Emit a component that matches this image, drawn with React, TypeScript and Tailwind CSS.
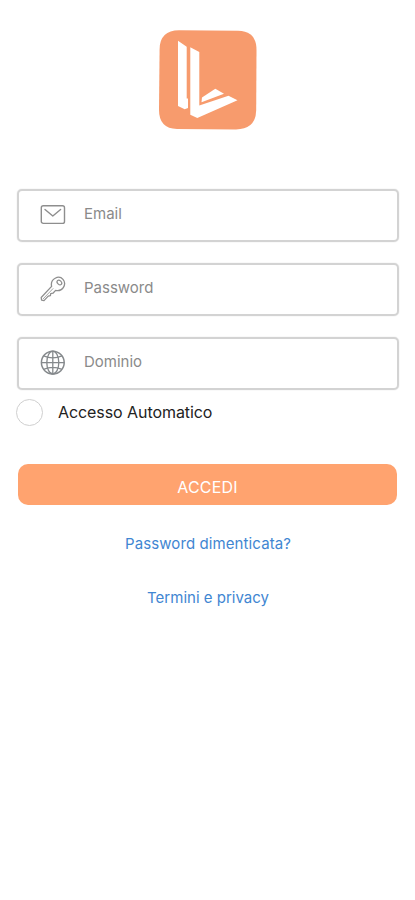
import React, { useState } from 'react';

type IconProps = { className?: string };

function Logo() {
  return (
    <svg width="98" height="100" viewBox="0 0 98 100" fill="none" aria-hidden="true">
      <path d="M20 0.3 L79 0.8 Q97.5 1 97.5 20 L97.2 80 Q97 99.4 77 99.4 L18 99 Q0 98.5 0 80 L0.6 19 Q1 0.5 20 0.3Z" fill="#f79b6d" />
      <path d="M19 10.7 27.7 16.7 V68.5 H29 V78 L25.7 79.3 19 76Z" fill="#fff" />
      <path d="M31.3 17.3 40.3 22 V75.5 L69.5 65.7 78.5 70.2 38.3 88 31.3 84.7Z" fill="#fff" />
      <path d="M43 67.5 56.3 58.8 65 63.8 42.5 72.3Z" fill="#fff" />
    </svg>
  );
}

function MailIcon({ className }: IconProps) {
  return (
    <svg className={className} width="26" height="26" viewBox="0 0 26 26" fill="none" stroke="currentColor" strokeWidth="1.4" strokeLinejoin="round" strokeLinecap="round">
      <rect x="1.3" y="3.8" width="23.2" height="17.6" rx="2" />
      <path d="M5 7.5 12.8 14 20.6 7.5" />
    </svg>
  );
}

function KeyIcon({ className }: IconProps) {
  return (
    <svg className={className} width="26" height="26" viewBox="0 0 26 26" fill="none" stroke="currentColor" strokeWidth="1.3" strokeLinejoin="round" strokeLinecap="round">
      <path d="M11.6 10.4C10.9 7 12.3 3.8 15.2 2.2 18 0.7 21.2 1.3 23 3.4 24.9 5.7 25 9 23.3 11.6 21.6 14.1 18.6 15.2 15.6 14.4L13 17.2 10.7 17.6 10.4 19.7 8.2 20.1 4 24.6 1.6 24.2 1.2 21.5Z" />
      <path d="M13 12.6 3.2 22.8" strokeWidth="0.8" />
      <ellipse cx="19.4" cy="6.5" rx="2.7" ry="1.9" transform="rotate(45 19.4 6.5)" strokeWidth="1.2" />
    </svg>
  );
}

function GlobeIcon({ className }: IconProps) {
  return (
    <svg className={className} width="26" height="26" viewBox="0 0 26 26" fill="none" stroke="currentColor" strokeWidth="1.3">
      <circle cx="12.8" cy="12.6" r="11.4" strokeWidth="1.5" />
      <ellipse cx="12.8" cy="12.6" rx="6" ry="11.4" />
      <path d="M12.8 1.2V24M1.4 12.6H24.2M3.6 5.8Q12.8 10 22 5.8M3.6 19.4Q12.8 15.2 22 19.4" />
    </svg>
  );
}

interface FieldProps {
  icon: React.ReactNode;
  type: string;
  placeholder: string;
}

function Field({ icon, type, placeholder }: FieldProps) {
  const [value, setValue] = useState('');

  return (
    <label className="flex h-[53px] items-center rounded-[5px] border-2 border-[#d3d3d3] pl-[21px] shadow-[0_0_1px_#bdbdbd]">
      {icon}
      <input
        type={type}
        value={value}
        onChange={(e) => setValue(e.target.value)}
        placeholder={placeholder}
        className="ml-[18px] min-w-0 flex-1 bg-transparent pb-0.5 text-[15px] outline-none placeholder:text-[#8a8a8a]"
      />
    </label>
  );
}

export default function App() {
  const [autoLogin, setAutoLogin] = useState(false);

  return (
    <div className="flex min-h-screen flex-col bg-white pr-4 pl-[17px] pt-[30px] font-[Inter,sans-serif]">
      <div className="flex justify-center">
        <Logo />
      </div>

      <form className="mt-[59px] flex flex-col" onSubmit={(e) => e.preventDefault()}>
        <div className="flex flex-col gap-[21px]">
          <Field type="email" placeholder="Email" icon={<MailIcon className="mb-px text-[#8e8e8e]" />} />
          <Field type="password" placeholder="Password" icon={<KeyIcon className="mb-px text-[#8e8e8e]" />} />
          <Field type="text" placeholder="Dominio" icon={<GlobeIcon className="mb-px text-[#85898c]" />} />
        </div>

        <button
          type="button"
          role="checkbox"
          aria-checked={autoLogin}
          onClick={() => setAutoLogin(!autoLogin)}
          className="-ml-px mt-[9px] flex h-[27px] items-center gap-[15px] text-[16px] tracking-[-0.07px] text-[#222222]"
        >
          <span className="flex size-[27px] items-center justify-center rounded-full border border-[#cfcfcf]">
            {autoLogin && <span className="size-4 rounded-full bg-[#ffa36f]" />}
          </span>
          <span className="pb-0.5">Accesso Automatico</span>
        </button>

        <button type="submit" className="ml-px mr-0.5 mt-[38px] h-[41px] rounded-[10px] bg-[#ffa36f] pt-1 text-[16px] tracking-[0.2px] text-white">
          ACCEDI
        </button>
      </form>

      <div className="mt-[27px] flex flex-col items-center gap-[30px] text-[15px] leading-6 text-[#3f86d2]">
        <a href="#" className="tracking-[0.1px]">Password dimenticata?</a>
        <a href="#">Termini e privacy</a>
      </div>
    </div>
  );
}
